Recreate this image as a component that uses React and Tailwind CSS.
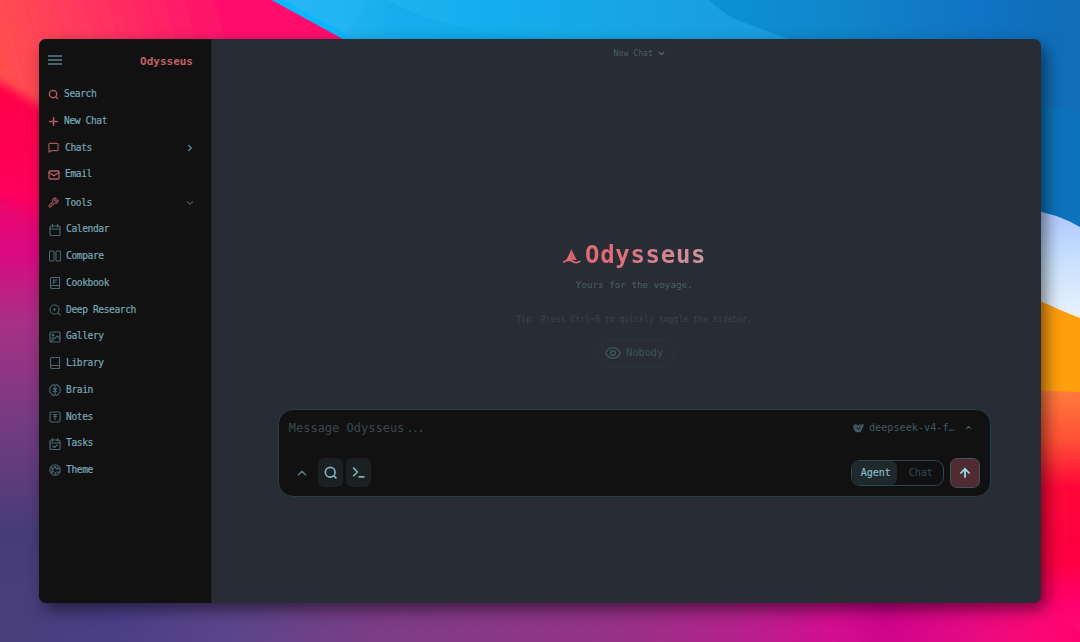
import React, { useState } from 'react';
import { ArrowUp, ChevronDown, ChevronRight, ChevronUp, Mail, MessageSquare, Plus, Search, Wrench } from 'lucide-react';

// shared svg wrapper for the tool icons that are drawn by hand
function Glyph({ children, className = 'size-[12px]', stroke = 2.3 }) {
  return (
    <svg viewBox="0 0 24 24" fill="none" stroke="currentColor" strokeWidth={stroke} strokeLinecap="round" strokeLinejoin="round" className={className}>
      {children}
    </svg>
  );
}

const tools = [
  { name: 'Calendar', icon: <><rect x="2" y="4" width="20" height="19" rx="2.5" /><path d="M2 10h20M7 1v5M17 1v5" /></> },
  { name: 'Compare', icon: <><rect x="1" y="2" width="9" height="20" rx="2" /><rect x="14" y="2" width="9" height="20" rx="2" /></> },
  { name: 'Cookbook', icon: <><path d="M3 19V4a3 3 0 0 1 3-3h15v22H6a3 3 0 0 1-3-3 3 3 0 0 1 3-3h15" /><path d="M9 6h7M9 10h5M9 6v7" /></> },
  { name: 'Deep Research', icon: <><circle cx="11" cy="11" r="9" /><path d="m18 18 4 4M11 9v4M9 11h4" /></> },
  { name: 'Gallery', icon: <><rect x="2" y="2" width="20" height="20" rx="2" /><circle cx="8" cy="8" r="2" /><path d="m4 21 13-11 5 5M5 15l3-2" /></> },
  { name: 'Library', icon: <><path d="M3 20V4a3 3 0 0 1 3-3h15v22H6a3 3 0 0 1-3-3 3 3 0 0 1 3-3h15M3 4v16" /></> },
  { name: 'Brain', icon: <><path d="M12 3C9 0 5 2 5 5c-3 1-4 4-3 7-1 4 0 6 3 7 0 4 5 5 7 2 2 3 7 2 7-2 3-1 4-3 3-7 1-3 0-6-3-7 0-3-4-5-7-2ZM12 3v18M9 9l3 3 3-3M9 15l3-2 3 2" /></> },
  { name: 'Notes', icon: <><rect x="2" y="2" width="20" height="20" rx="3" /><path d="M8 7h8M9 11h6M12 7v10" /></> },
  { name: 'Tasks', icon: <><rect x="2" y="4" width="20" height="19" rx="2.5" /><path d="M2 10h20M7 1v5M17 1v5m-9 10 3 3 5-5" /></> },
  { name: 'Theme', icon: <><circle cx="12" cy="12" r="10.5" /><path d="M14 22c-3-3-1-6 2-6h6" /><circle cx="7" cy="9" r="1.6" /><circle cx="12" cy="6" r="1.6" /><circle cx="17" cy="9" r="1.6" /><circle cx="7" cy="15" r="1.6" /></> },
];

function Wallpaper() {
  return (
    <svg className="absolute inset-0 size-full" viewBox="0 0 1080 642" preserveAspectRatio="none" aria-hidden="true">
      <defs>
        <linearGradient id="base" x1="0" y1="0" x2="0" y2="642" gradientUnits="userSpaceOnUse">
          <stop offset=".14" stopColor="#ff0048" />
          <stop offset=".3" stopColor="#ff005c" />
          <stop offset=".39" stopColor="#dc0880" />
          <stop offset=".5" stopColor="#a83085" />
          <stop offset=".65" stopColor="#773b82" />
          <stop offset=".83" stopColor="#453d78" />
          <stop offset="1" stopColor="#4a3f7c" />
        </linearGradient>
        <linearGradient id="coral" x1="0" y1="60" x2="230" y2="0" gradientUnits="userSpaceOnUse">
          <stop offset="0" stopColor="#ff4f4e" />
          <stop offset=".35" stopColor="#ff3a5d" />
          <stop offset="1" stopColor="#ff0d6c" />
        </linearGradient>
        <linearGradient id="sky" x1="290" y1="0" x2="1080" y2="0" gradientUnits="userSpaceOnUse">
          <stop offset="0" stopColor="#27b6f5" />
          <stop offset=".25" stopColor="#14aeec" />
          <stop offset=".6" stopColor="#1a9ce0" />
        </linearGradient>
        <linearGradient id="sea" x1="710" y1="0" x2="1060" y2="0" gradientUnits="userSpaceOnUse">
          <stop offset="0" stopColor="#0a92d6" />
          <stop offset=".4" stopColor="#1184ca" />
          <stop offset=".8" stopColor="#1072c3" />
          <stop offset="1" stopColor="#106eb8" />
        </linearGradient>
        <linearGradient id="foam" x1="0" y1="215" x2="0" y2="315" gradientUnits="userSpaceOnUse">
          <stop offset="0" stopColor="#b2caff" />
          <stop offset=".5" stopColor="#cae3fd" />
          <stop offset="1" stopColor="#e8f1fb" />
        </linearGradient>
        <linearGradient id="ember" x1="0" y1="390" x2="0" y2="642" gradientUnits="userSpaceOnUse">
          <stop offset="0" stopColor="#ff7c3d" />
          <stop offset=".2" stopColor="#ff5035" />
          <stop offset=".38" stopColor="#ff0838" />
          <stop offset=".68" stopColor="#ff0042" />
          <stop offset=".86" stopColor="#ff0070" />
          <stop offset="1" stopColor="#f81078" />
        </linearGradient>
        <linearGradient id="floor" x1="0" y1="0" x2="1080" y2="0" gradientUnits="userSpaceOnUse">
          <stop offset="0" stopColor="#483e78" />
          <stop offset=".11" stopColor="#4b3f88" />
          <stop offset=".22" stopColor="#5c458a" />
          <stop offset=".35" stopColor="#7d3d87" />
          <stop offset=".57" stopColor="#963287" />
          <stop offset=".68" stopColor="#b3228c" />
          <stop offset=".77" stopColor="#d30e90" />
          <stop offset=".82" stopColor="#ce048b" />
          <stop offset=".9" stopColor="#e60a82" />
          <stop offset=".96" stopColor="#fb0875" />
          <stop offset="1" stopColor="#ff0070" />
        </linearGradient>
        <linearGradient id="fold" x1="340" y1="0" x2="400" y2="0" gradientUnits="userSpaceOnUse">
          <stop offset="0" stopColor="#0ba4e5" stopOpacity="0" />
          <stop offset="1" stopColor="#0ba4e5" stopOpacity=".4" />
        </linearGradient>
        <filter id="soft"><feGaussianBlur stdDeviation="5" /></filter>
      </defs>
      <rect width="1080" height="642" fill="url(#base)" />
      <path d="M-20 72Q20 92 60 120L400 80V-20H-20Z" fill="url(#coral)" filter="url(#soft)" />
      <path d="M-10 200Q25 206 50 232V260H-10Z" fill="#d70a82" opacity=".35" filter="url(#soft)" />
      <path d="M272 0 345 40 400 80H1080V0Z" fill="url(#sky)" />
      <path d="M272 0 345 40h12L283 0Z" fill="#00b9ff" opacity=".8" />
      <path d="M387 0Q450 36 570 39H340L370 0Z" fill="url(#fold)" />
      <path d="M709 0Q722 13 735 19L795 42 860 90V240H1080V0Z" fill="url(#sea)" />
      <path d="M1030 106Q1060 107 1080 114V240H1030Z" fill="#087bc2" opacity=".45" />
      <path d="M1030 210Q1056 213 1080 227V325H1030Z" fill="url(#foam)" />
      <path d="M1030 296Q1052 307 1080 318V400H1030Z" fill="#ff9f0d" />
      <path d="M1030 390 1080 392V642H1030Z" fill="url(#ember)" />
      <path d="M0 590H1030L1080 632V642H0Z" fill="url(#floor)" />
    </svg>
  );
}

function NavItem({ icon, label, trailing, className = '' }) {
  return (
    <button className={`flex h-[26.75px] w-full shrink-0 items-center text-left ${className}`}>
      {icon}
      <span>{label}</span>
      {trailing && <span className="ml-auto text-[#5c808b]">{trailing}</span>}
    </button>
  );
}

function Sidebar() {
  return (
    <aside className="flex w-[172.5px] shrink-0 flex-col border-r border-[#1d2329] bg-[#111111] pl-[9px] pr-[17.5px] pt-[13px] text-[9.6px] tracking-[-0.4px] text-[#76a6b4] [-webkit-text-stroke:0.2px]">
      <div className="mb-[13px] flex h-[16px] items-start justify-between">
        <div className="mt-[3px] flex w-[14px] flex-col gap-[2px]">
          <span className="h-[2px] bg-[#48636c]" />
          <span className="h-[2px] bg-[#48636c]" />
          <span className="h-[2px] bg-[#48636c]" />
        </div>
        <span className="mt-[2px] text-[11px] font-bold leading-[16px] tracking-normal text-[#c25f68] [-webkit-text-stroke:0]">Odysseus</span>
      </div>
      <NavItem label="Search" icon={<Search className="mr-[5px] size-[11px] text-[#b75862]" strokeWidth={3} />} />
      <NavItem label="New Chat" icon={<Plus className="mr-[4px] -ml-px size-[13px] text-[#b75862]" strokeWidth={2.8} />} />
      <NavItem label="Chats" icon={<MessageSquare className="mr-[6px] size-[11px] text-[#a9525b]" strokeWidth={2.6} />} trailing={<ChevronRight className="-mr-[2px] size-[10px]" strokeWidth={3.8} />} />
      <NavItem label="Email" icon={<Mail className="mr-[5px] size-[12px] text-[#b75862]" strokeWidth={2.6} />} />
      <NavItem className="mt-[1.5px]" label="Tools" icon={<Wrench className="mr-[6px] size-[11px] text-[#914a52]" strokeWidth={2.8} />} trailing={<ChevronDown className="-mr-[2px] size-[10px] text-[#3c5058]" strokeWidth={3} />} />
      {tools.map((t) => (
        <NavItem key={t.name} label={t.name} icon={<Glyph className="mr-[5px] ml-px size-[12px] text-[#48666f]">{t.icon}</Glyph>} />
      ))}
    </aside>
  );
}

function Hero() {
  return (
    <div className="flex flex-col items-center">
      <div className="flex h-[32px] items-center">
        <svg viewBox="0 0 18 16" className="mr-[4px] mt-px h-[16px] w-[18px]">
          <path d="M8.200 1C7.200 5 5.200 8.500 3 12h5.500Z" fill="#e06c75" />
          <path d="M8.200 1c2 4 3.500 7 5.600 11H8.200Z" fill="#cf646f" />
          <path d="M.8 14c2.500-1.800 5-2.200 7.500-1.200 2.200 1.400 4 2.500 5.900 1.700 1.200-.5 1.500-.9 2.800-1" fill="none" stroke="#df6b75" strokeWidth="1.700" strokeLinecap="round" />
        </svg>
        <h1 className="-mr-[.7px] bg-linear-to-r from-[#df6b75] from-20% to-[#c994a5] bg-clip-text text-[24px] font-bold leading-[32px] tracking-[.7px] text-transparent">Odysseus</h1>
      </div>
      <p className="mt-[7px] text-[9.25px] leading-[14px] text-[#49616b]">Yours for the voyage.</p>
      <p className="mt-[20.5px] text-[8.16px] leading-[13px] text-[#374751]">Tip: Press Ctrl+B to quickly toggle the sidebar.</p>
      <button className="mt-[13.5px] flex h-[28px] items-center rounded-full border border-[#2b333b] px-[11px] text-[10.2px] text-[#3d545d]">
        <Glyph className="mr-[5px] h-[16px] w-[16px]" stroke={2.3}>
          <path d="M1 12c5-10.5 17-10.5 22 0-5 10.500-17 10.500-22 0Z" />
          <circle cx="12" cy="12" r="3.500" />
        </Glyph>
        Nobody
      </button>
    </div>
  );
}

function Composer() {
  const [mode, setMode] = useState('Agent');
  return (
    <div className="flex h-[88px] w-[713px] flex-col justify-between rounded-[15px] border-[1.5px] border-[#263f48] bg-[#111111] pb-[9px] pl-[10px] pr-[10px] pt-[9px]">
      <div className="flex h-[18px] items-center justify-between">
        <span className="-mt-px text-[12px] text-[#374950]">Message Odysseus<span className="ml-[2px] tracking-[-1.8px]">...</span></span>
        <div className="flex items-center pr-[7px] text-[10.2px] text-[#405862]">
          <svg viewBox="0 0 24 22" className="mr-[5px] h-[10px] w-[11px]" fill="currentColor">
            <path d="M23 2c-3 0-4 1-5 3-2-1-3-3-5-4 0 3 1 5 3 7C12 7 9 3 5 3 1 4 0 8 1 12c2 7 8 10 14 8l3 1c1-1-1-2-1-2 3-3 4-6 4-9 2-2 3-5 2-8ZM14 16c-4-1-5-6-9-6 2-2 7 0 9 6Zm1-3c-2-1-2-3-1-4 2 0 3 2 2 4Z" fillRule="evenodd" />
          </svg>
          deepseek-v4-f…
          <ChevronUp className="ml-[9px] size-[9px]" strokeWidth={3} />
        </div>
      </div>
      <div className="flex h-[29px] items-center">
        <ChevronUp className="ml-[6px] mr-[9px] size-[14px] text-[#577a84]" strokeWidth={2.8} />
        <button className="mr-[3px] flex h-[29px] w-[25px] items-center justify-center rounded-[6px] bg-[#1b2022] text-[#80b4c4]">
          <Glyph className="size-[13px]" stroke={3}><circle cx="11.500" cy="11.500" r="9" /><path d="m18 18 4 4" /></Glyph>
        </button>
        <button className="flex h-[29px] w-[25px] items-center justify-center rounded-[6px] bg-[#1b2022] text-[#80b4c4]">
          <Glyph className="size-[13px]" stroke={3}><path d="m3 4 7 7-7 7M13 20h9" /></Glyph>
        </button>
        <div className="ml-auto mr-[6px] flex h-[26px] w-[93px] overflow-hidden rounded-[9px] border-[1.5px] border-[#2b4750] text-[10px]">
          {['Agent', 'Chat'].map((m) => (
            <button key={m} onClick={() => setMode(m)} className={`h-full w-[45px] ${mode === m ? 'rounded-r-[6px] bg-[#1f292c] pl-[3px] text-[#86b9c8] [-webkit-text-stroke:0.2px]' : 'pl-[3px] text-[#364b53]'}`}>{m}</button>
          ))}
        </div>
        <button className="flex size-[30px] items-center justify-center rounded-[7px] border-[1.5px] border-[#40535d] bg-[#502b31] text-[#9cdef2]">
          <ArrowUp className="size-[14px]" strokeWidth={3} />
        </button>
      </div>
    </div>
  );
}

export default function App() {
  return (
    <div className="relative h-[642px] w-[1080px] overflow-hidden px-[39px] pt-[39px] [font-family:'DejaVu_Sans_Mono',monospace]">
      <Wallpaper />
      <div className="relative flex h-[564px] w-[1002px] overflow-hidden rounded-[7px] bg-[#282c34] shadow-[5px_7px_16px_rgba(0,0,0,0.5)]">
        <Sidebar />
        <main className="flex flex-1 flex-col items-center pl-[16px]">
          <button className="ml-[11px] mt-[7px] flex h-[14px] items-center text-[8.16px] text-[#475e68]">
            New Chat
            <ChevronDown className="ml-[4px] size-[9px]" strokeWidth={4} />
          </button>
          <div className="mt-[179px]"><Hero /></div>
          <div className="mt-[42px]"><Composer /></div>
        </main>
      </div>
    </div>
  );
}
